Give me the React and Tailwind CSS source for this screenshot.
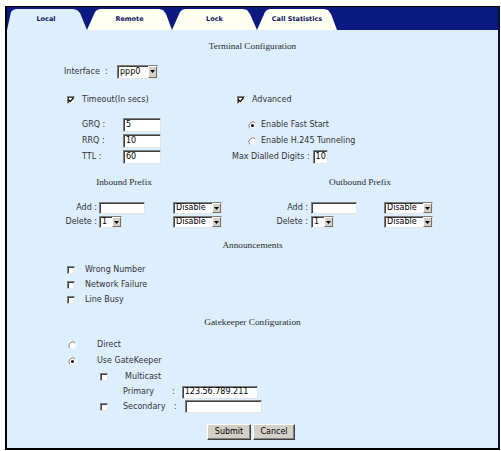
const sunken =
  "border border-t-[#808080] border-l-[#808080] border-b-[#e4e4e4] border-r-[#e4e4e4] shadow-[inset_1px_1px_0_#404040]";

const CheckBox = ({ checked }) => (
  <span
    className={`inline-flex w-[8px] h-[8px] bg-white flex-shrink-0 items-center justify-center ${sunken}`}
  >
    {checked && (
      <svg width="6" height="6" viewBox="0 0 6 6">
        <path d="M0.5 2.8 L2.2 4.6 L5.5 1" stroke="#000" strokeWidth="1.3" fill="none" />
      </svg>
    )}
  </span>
);

const Radio = ({ checked }) => (
  <svg width="9" height="9" viewBox="0 0 9 9" className="flex-shrink-0">
    <circle cx="4.5" cy="4.5" r="4" fill="#fff" />
    <path d="M1.7 7.3 A4 4 0 0 1 7.3 1.7" stroke="#808080" strokeWidth="1" fill="none" />
    <path d="M7.3 1.7 A4 4 0 0 1 1.7 7.3" stroke="#e8e8e8" strokeWidth="1" fill="none" />
    {checked && <circle cx="4.5" cy="4.5" r="1.5" fill="#000" />}
  </svg>
);

const TextInput = ({ value, className }) => (
  <div
    className={`flex items-center bg-white pl-[2px] text-black overflow-hidden ${sunken} ${className}`}
  >
    {value}
  </div>
);

const Select = ({ value, className }) => (
  <div className={`flex items-stretch bg-white text-black ${sunken} ${className}`}>
    <span className="flex-1 flex items-center pl-[2px]">{value}</span>
    <span className="w-[9px] flex items-center justify-center bg-[#d4d0c8] border border-t-white border-l-white border-b-[#707070] border-r-[#707070]">
      <svg width="5" height="3" viewBox="0 0 5 3">
        <path d="M0 0 H5 L2.5 3 Z" fill="#000" />
      </svg>
    </span>
  </div>
);

const Button = ({ children, className }) => (
  <div
    className={`flex items-center justify-center bg-[#d4d0c8] text-black border border-t-white border-l-white border-b-[#404040] border-r-[#404040] shadow-[inset_-1px_-1px_0_#808080] ${className}`}
  >
    {children}
  </div>
);

const Heading = ({ children, className }) => (
  <div
    className={`flex items-center justify-center h-[16px] font-['Liberation_Serif',serif] text-[9.25px] text-[#2a2a2a] ${className}`}
  >
    {children}
  </div>
);

const Tab = ({ label, className }) => (
  <div
    className={`h-[21px] flex items-center justify-center font-bold text-[6.5px] text-[#0a1460] ${className}`}
  >
    {label}
  </div>
);

export default function App() {
  return (
    <div className="w-[501px] h-[451px] bg-white pt-[6px] pl-[5px] font-['DejaVu_Sans',sans-serif] text-[8px] leading-none">
      <div className="w-[495px] h-[444px] flex flex-col border-t border-t-black border-l-2 border-l-black border-r-2 border-r-[#0a0f30] border-b-2 border-b-black">
        <div className="h-[23px] bg-[#0b1a80] flex items-end">
          <Tab
            label="Local"
            className="w-[80px] pr-[2px] bg-[#ddeeff] [clip-path:polygon(0_100%,4px_3px,6px_1px,9px_0,66px_0,70px_1px,73px_4px,80px_100%)]"
          />
          <Tab
            label="Remote"
            className="w-[85px] bg-[#fffff2] [clip-path:polygon(0_100%,8px_3px,10px_1px,13px_0,72px_0,76px_1px,79px_5px,85px_100%)]"
          />
          <Tab
            label="Lock"
            className="w-[85px] bg-[#fffff2] [clip-path:polygon(0_100%,8px_3px,10px_1px,13px_0,71px_0,75px_1px,78px_5px,85px_100%)]"
          />
          <Tab
            label="Call Statistics"
            className="w-[80px] bg-[#fffff2] [clip-path:polygon(0_100%,8px_3px,10px_1px,13px_0,67px_0,71px_1px,74px_5px,80px_100%)]"
          />
        </div>

        <div className="flex-1 bg-[#ddeeff] text-[#333] flex flex-col">
          <Heading className="mt-[9px]">Terminal Configuration</Heading>

          <div className="mt-[9px] h-[15px] flex items-center pl-[57px]">
            <span className="w-[53px]">Interface&nbsp;&nbsp;:</span>
            <Select value="ppp0" className="w-[41px] h-[14px]" />
          </div>

          <div className="mt-[13px] h-[16px] flex items-center">
            <div className="w-[225px] flex items-center pl-[60px]">
              <CheckBox checked />
              <span className="ml-[7px]">Timeout(In secs)</span>
            </div>
            <div className="flex items-center pl-[5px]">
              <CheckBox checked />
              <span className="ml-[7px]">Advanced</span>
            </div>
          </div>

          <div className="mt-[9px] flex">
            <div className="w-[225px] flex flex-col pl-[75px]">
              {[
                ["GRQ :", "5"],
                ["RRQ :", "10"],
                ["TTL :", "60"],
              ].map(([label, val]) => (
                <div key={label} className="h-[16px] flex items-center">
                  <span className="w-[41px]">{label}</span>
                  <TextInput value={val} className="w-[38px] h-[14px]" />
                </div>
              ))}
            </div>
            <div className="flex flex-col">
              <div className="h-[16px] flex items-center pl-[16px]">
                <Radio checked />
                <span className="ml-[4px]">Enable Fast Start</span>
              </div>
              <div className="h-[16px] flex items-center pl-[16px]">
                <Radio />
                <span className="ml-[4px]">Enable H.245 Tunneling</span>
              </div>
              <div className="h-[16px] flex items-center">
                <span>Max Dialled Digits :</span>
                <TextInput value="10" className="ml-[3px] w-[15px] h-[14px]" />
              </div>
            </div>
          </div>

          <div className="mt-[10px] flex">
            <Heading className="w-[234px]">Inbound Prefix</Heading>
            <Heading className="w-[238px]">Outbound Prefix</Heading>
          </div>

          <div className="mt-[10px] h-[14px] flex items-center">
            <span className="w-[90px] text-right">Add :</span>
            <TextInput value="" className="ml-[2px] w-[46px] h-[12px]" />
            <Select value="Disable" className="ml-[28px] w-[49px] h-[12px]" />
            <span className="w-[86px] text-right">Add :</span>
            <TextInput value="" className="ml-[3px] w-[46px] h-[12px]" />
            <Select value="Disable" className="ml-[27px] w-[49px] h-[12px]" />
          </div>
          <div className="h-[14px] flex items-center">
            <span className="w-[90px] text-right">Delete :</span>
            <Select value="1" className="ml-[2px] w-[23px] h-[12px]" />
            <Select value="Disable" className="ml-[51px] w-[49px] h-[12px]" />
            <span className="w-[86px] text-right">Delete :</span>
            <Select value="1" className="ml-[3px] w-[23px] h-[12px]" />
            <Select value="Disable" className="ml-[50px] w-[49px] h-[12px]" />
          </div>

          <Heading className="mt-[9px]">Announcements</Heading>

          <div className="mt-[8px] flex flex-col pl-[60px]">
            {["Wrong Number", "Network Failure", "Line Busy"].map((t) => (
              <div key={t} className="h-[15px] flex items-center">
                <CheckBox />
                <span className="ml-[10px]">{t}</span>
              </div>
            ))}
          </div>

          <Heading className="mt-[8px]">Gatekeeper Configuration</Heading>

          <div className="mt-[6px] flex flex-col pl-[61px]">
            <div className="h-[16px] flex items-center">
              <Radio />
              <span className="ml-[20px]">Direct</span>
            </div>
            <div className="h-[16px] flex items-center">
              <Radio checked />
              <span className="ml-[20px]">Use GateKeeper</span>
            </div>
          </div>

          <div className="flex flex-col pl-[93px]">
            <div className="h-[16px] flex items-center">
              <CheckBox />
              <span className="ml-[17px]">Multicast</span>
            </div>
            <div className="h-[14px] flex items-center pl-[23px]">
              <span className="w-[49px]">Primary</span>
              <span>:</span>
              <TextInput value="123.56.789.211" className="ml-[7px] w-[76px] h-[13px]" />
            </div>
            <div className="h-[15px] flex items-center">
              <CheckBox />
              <span className="ml-[15px] w-[51px]">Secondary</span>
              <span>:</span>
              <TextInput value="" className="ml-[8px] w-[77px] h-[13px]" />
            </div>
          </div>

          <div className="mt-[10px] flex justify-center gap-[2px] pr-[3px]">
            <Button className="w-[44px] h-[16px]">Submit</Button>
            <Button className="w-[42px] h-[16px]">Cancel</Button>
          </div>
        </div>
      </div>
    </div>
  );
}
